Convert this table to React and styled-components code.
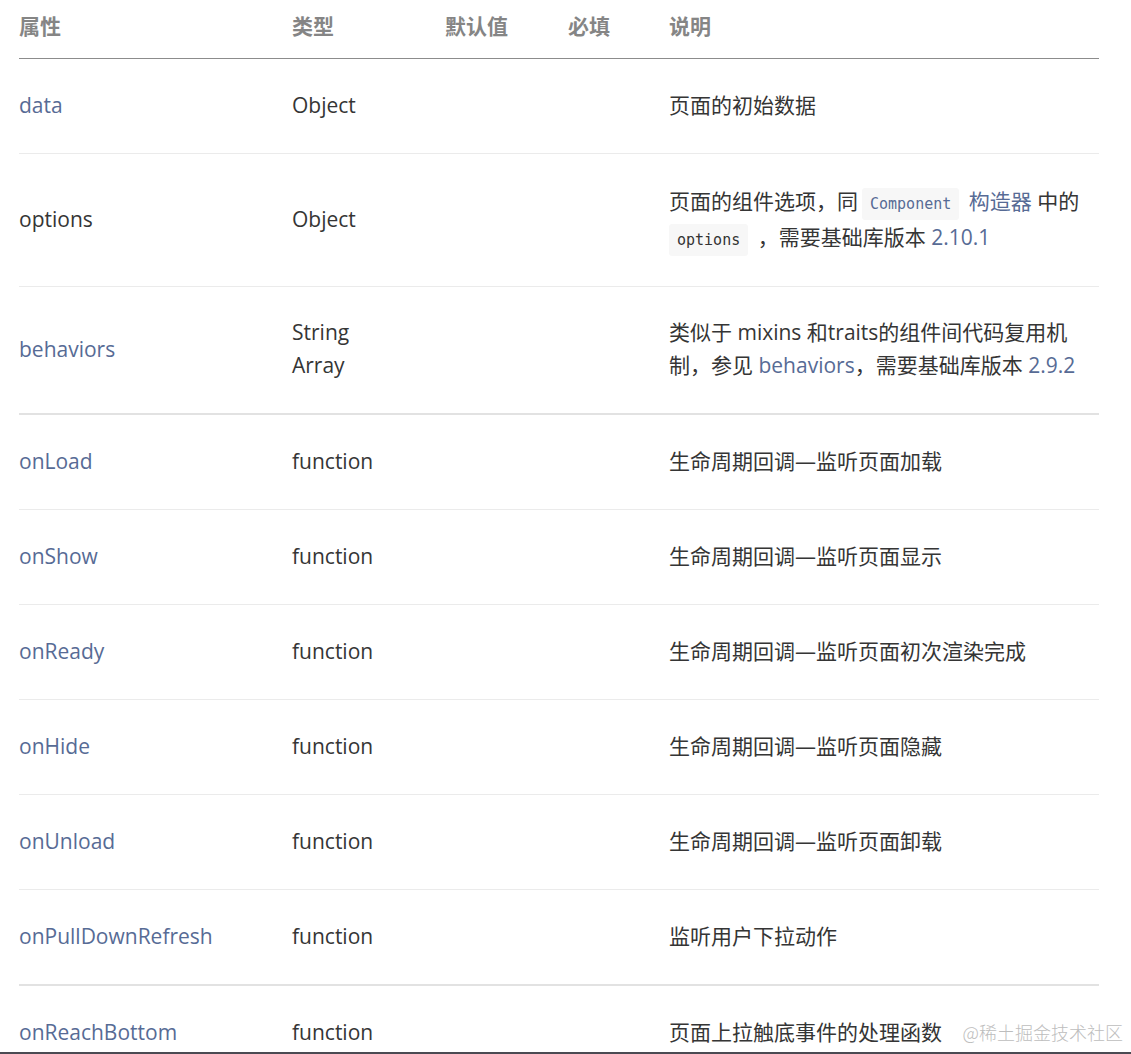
import React from "react";
import styled, { createGlobalStyle } from "styled-components";

const GlobalStyle = createGlobalStyle`
  html, body {
    margin: 0;
    padding: 0;
    background: #fff;
    overflow: hidden;
  }
  body {
    font-family: "Open Sans", "Noto Sans CJK SC", sans-serif;
    color: #333;
  }
`;

const Page = styled.div`
  height: 1052px;
  overflow: hidden;
  border-bottom: 2px solid #4b4a52;
  padding: 0 32px 0 19px;
  position: relative;
`;

const Table = styled.div`
  width: 1080px;
  font-size: 21px;
`;

const Row = styled.div`
  display: grid;
  grid-template-columns: 273px 153px 123px 101px 1fr;
  align-items: center;
  padding: ${(p) => (p.head ? "9px 0 15px" : "29px 0 31px")};
  line-height: ${(p) => p.lh || "34px"};
  border-bottom: ${(p) => (p.strong ? "2px" : "1px")} solid
    ${(p) => (p.head ? "#8c8c8c" : p.strong ? "#e2e2e2" : "#ebebeb")};
`;

const HeadCell = styled.div`
  font-weight: 700;
  color: #858585;
`;

const Cell = styled.div`
  color: ${(p) => (p.link ? "#576b95" : "#353535")};
`;

const Link = styled.span`
  color: #576b95;
`;

const Code = styled.code`
  font-family: "DejaVu Sans Mono", "Liberation Mono", monospace;
  font-size: 15px;
  line-height: 1;
  color: ${(p) => (p.link ? "#576b95" : "#333")};
  background: #f7f7f7;
  padding: 7px 8px;
  margin: 0 4px;
  border-radius: 3px;
`;

const Watermark = styled.div`
  position: absolute;
  right: 8px;
  bottom: 7px;
  font-size: 18px;
  color: #bdbdbd;
  font-family: "Noto Sans CJK SC", sans-serif;
  font-weight: 300;
`;

const rows = [
  { name: "data", link: true, type: "Object", desc: "页面的初始数据" },
  {
    name: "options",
    type: "Object",
    lh: "36px",
    desc: (
      <>
        页面的组件选项，同<Code link>Component</Code> <Link>构造器</Link> 中的
        <br />
        <Code style={{ marginLeft: 0 }}>options</Code> ，需要基础库版本 <Link>2.10.1</Link>
      </>
    ),
  },
  {
    name: "behaviors",
    link: true,
    lh: "33px",
    type: (
      <>
        String
        <br />
        Array
      </>
    ),
    desc: (
      <>
        类似于 mixins 和traits的组件间代码复用机
        <br />
        制，参见 <Link>behaviors</Link>，需要基础库版本 <Link>2.9.2</Link>
      </>
    ),
    strong: true,
  },
  { name: "onLoad", link: true, type: "function", desc: "生命周期回调—监听页面加载" },
  { name: "onShow", link: true, type: "function", desc: "生命周期回调—监听页面显示" },
  { name: "onReady", link: true, type: "function", desc: "生命周期回调—监听页面初次渲染完成" },
  { name: "onHide", link: true, type: "function", desc: "生命周期回调—监听页面隐藏" },
  { name: "onUnload", link: true, type: "function", desc: "生命周期回调—监听页面卸载" },
  { name: "onPullDownRefresh", link: true, type: "function", desc: "监听用户下拉动作", strong: true },
  { name: "onReachBottom", link: true, type: "function", desc: "页面上拉触底事件的处理函数" },
];

export default function App() {
  return (
    <>
      <GlobalStyle />
      <Page>
        <Table>
          <Row head>
            <HeadCell>属性</HeadCell>
            <HeadCell>类型</HeadCell>
            <HeadCell>默认值</HeadCell>
            <HeadCell>必填</HeadCell>
            <HeadCell>说明</HeadCell>
          </Row>
          {rows.map((r) => (
            <Row key={r.name} strong={r.strong} lh={r.lh}>
              <Cell link={r.link}>{r.name}</Cell>
              <Cell>{r.type}</Cell>
              <Cell />
              <Cell />
              <Cell>{r.desc}</Cell>
            </Row>
          ))}
        </Table>
        <Watermark>@稀土掘金技术社区</Watermark>
      </Page>
    </>
  );
}
